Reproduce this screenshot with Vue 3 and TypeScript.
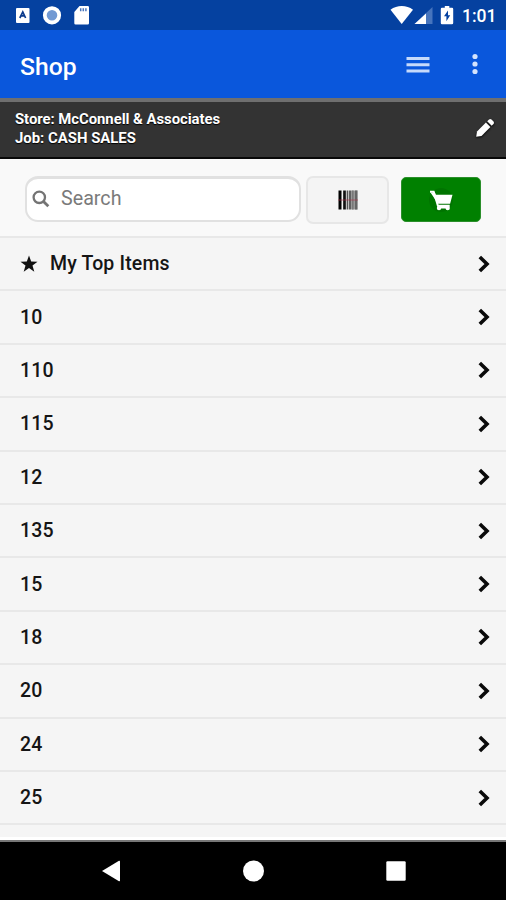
<script setup lang="ts">
interface Row {
  label: string
  starred?: boolean
}

const rows: Row[] = [
  { label: 'My Top Items', starred: true },
  ...['10', '110', '115', '12', '135', '15', '18', '20', '24', '25'].map((label) => ({ label })),
]
</script>

<template>
  <div class="screen">
    <div class="status">
      <svg class="status-left" width="80" height="30" viewBox="0 0 80 30">
        <rect x="0" y="8" width="13.5" height="15" rx="1" fill="#fff" />
        <path d="M3.8 18 6.800 12 9.600 18M5 15.900h3.400" fill="none" stroke="#0a3a8c" stroke-width="1.700" />
        <circle cx="36" cy="15.300" r="7.200" fill="#7199d3" stroke="#fff" stroke-width="3.800" />
        <path d="M63.500 6h8.200a1.300 1.300 0 0 1 1.300 1.300v16a1.300 1.300 0 0 1-1.300 1.300H59.600a1.300 1.300 0 0 1-1.300-1.300V12z" fill="#fff" />
        <path d="M64.700 8.300v3M67.300 8.300v3M69.900 8.300v3" stroke="#4a76bd" stroke-width="1.500" />
      </svg>
      <svg class="status-right" width="72" height="30" viewBox="0 0 72 30">
        <path d="M0.500 9.700C7 4.700 16.500 4.700 23 9.700L11.700 24z" fill="#fff" />
        <path d="M24.500 24 42.500 7V24z" fill="#4674bd" />
        <path d="M24.500 24 36 13.500V24z" fill="#fff" />
        <path d="M54.800 6h4.500v1.800h2.700a1.200 1.200 0 0 1 1.200 1.200v14a1.200 1.200 0 0 1-1.200 1.200h-10a1.200 1.200 0 0 1-1.200-1.200v-14a1.200 1.200 0 0 1 1.200-1.200h2.800z" fill="#fff" />
        <path d="M58 10.500 54 16.300h2.400v5l3.800-6h-2.200z" fill="#0541a0" />
      </svg>
      <span class="clock">1:01</span>
    </div>

    <header class="appbar">
      <h1>Shop</h1>
      <svg class="menu" width="24" height="18" viewBox="0 0 24 18">
        <path d="M.5 2.500h23M.5 8.700h23M.5 15h23" stroke="#c6dafb" stroke-width="2.900" />
      </svg>
      <svg class="dots" width="6" height="22" viewBox="0 0 6 22">
        <circle cx="3" cy="3.500" r="2.600" /><circle cx="3" cy="11" r="2.600" /><circle cx="3" cy="18.500" r="2.600" />
      </svg>
    </header>

    <section class="context">
      <div class="context-text">
        <div class="store">Store: McConnell &amp; Associates</div>
        <div>Job: CASH SALES</div>
      </div>
      <svg class="pencil" width="20" height="20" viewBox="0 0 20 20">
        <path d="M1.200 18.800 2 13.500 10.900 4.600 15.400 9.100 6.500 18z" fill="#fff" />
        <path d="M12.200 3.300 14 1.500Q15.300.6 16.500 1.500L18.500 3.500Q19.400 4.700 18.500 6L16.700 7.800z" fill="#fff" />
      </svg>
    </section>

    <section class="tools">
      <label class="search">
        <svg width="18" height="18" viewBox="0 0 18 18">
          <circle cx="7.300" cy="7.300" r="5.700" fill="none" stroke="#747474" stroke-width="2.300" />
          <path d="M11.500 11.500 16.300 16.300" stroke="#747474" stroke-width="2.800" />
        </svg>
        <input type="text" placeholder="Search" />
      </label>
      <button class="scan">
        <svg width="20" height="20" viewBox="0 0 20 20">
          <rect x="13" y=".5" width="6.500" height="19" fill="#999" />
          <path d="M2 .5v19" stroke="#000" stroke-width="3" />
          <path d="M6.500.5v19" stroke="#111" stroke-width="2.700" />
          <path d="M9.500.5v19" stroke="#555" stroke-width="1.700" />
          <path d="M12 .5v19" stroke="#444" stroke-width="1.700" />
          <path d="M14.800.5v19" stroke="#777" stroke-width="1.500" />
          <path d="M18.200.5v19" stroke="#666" stroke-width="2.400" />
          <path d="M0 10h20" stroke="#b03048" stroke-width="1" opacity=".6" />
        </svg>
      </button>
      <button class="cart">
        <svg width="30" height="26" viewBox="0 0 30 26">
          <circle cx="15" cy="13" r="12" fill="#007400" />
          <path d="M4.500 5.500h4.400l.8 2.300H26.500l-2.400 9H12z" fill="#fff" />
          <path d="M4 4.800h3.700l4.200 14h11.800" fill="none" stroke="#fff" stroke-width="2" />
          <path d="M13 18.500h9v3h-9z" fill="#fff" />
          <circle cx="13" cy="21" r="2.200" fill="#fff" /><circle cx="21.700" cy="21" r="2.200" fill="#fff" />
        </svg>
      </button>
    </section>

    <ul class="list">
      <li v-for="row in rows" :key="row.label">
        <svg v-if="row.starred" class="star" width="18" height="18" viewBox="0 0 18 18">
          <path d="M9 .5 11.200 6.600 17.500 6.700 12.500 10.500 14.300 16.700 9 13.100 3.700 16.700 5.500 10.500.5 6.700 6.800 6.600z" fill="#111" />
        </svg>
        <span>{{ row.label }}</span>
        <svg class="chevron" width="12" height="18" viewBox="0 0 12 18">
          <path d="M1.800 2 9 9 1.800 16" fill="none" stroke="#0a0a0a" stroke-width="3.600" />
        </svg>
      </li>
    </ul>

    <nav class="navbar">
      <svg width="20" height="24" viewBox="0 0 20 24"><path d="M1 12 18 1.800Q19 1.500 19 2.500V21.500Q19 22.500 18 22.200z" fill="#fff" /></svg>
      <svg width="22" height="24" viewBox="0 0 22 24"><circle cx="10.500" cy="12" r="10.500" fill="#fff" /></svg>
      <svg width="20" height="24" viewBox="0 0 20 24"><rect x=".3" y="2.300" width="19.400" height="19.400" rx="1.200" fill="#fff" /></svg>
    </nav>
  </div>
</template>

<style>
body {
  margin: 0;
}
</style>

<style scoped>
.screen {
  display: flex;
  flex-direction: column;
  width: 506px;
  height: 900px;
  overflow: hidden;
  background: #f5f5f5;
  color: #151515;
  font-family: Roboto, "Liberation Sans", sans-serif;
}
.screen > * {
  box-sizing: border-box;
  flex-shrink: 0;
}
svg {
  display: block;
  flex-shrink: 0;
}
.status {
  display: flex;
  height: 30px;
  padding: 0 11px 0 16px;
  align-items: center;
  background: #0541a0;
  color: #fff;
}
.status-right {
  margin-left: auto;
}
.clock {
  width: 33px;
  padding-top: 2px;
  font-size: 17.500px;
  font-weight: 500;
  line-height: 28px;
  white-space: nowrap;
}
.appbar {
  display: flex;
  height: 68px;
  padding: 0 28px 0 20px;
  align-items: center;
  background: #0a57dc;
}
h1 {
  margin: 4px 0 0;
  color: #fff;
  font-size: 24.700px;
  font-weight: 500;
}
.menu {
  margin: 2px 0 0 auto;
}
.dots {
  margin-left: 42px;
  fill: #d4e3fd;
}
.context {
  display: flex;
  height: 61px;
  padding: 0 11px 0 15px;
  align-items: center;
  justify-content: space-between;
  border-top: 4px solid #6f6f6f;
  border-bottom: 2px solid #080808;
  background: #333;
}
.context-text {
  margin-top: -2px;
  color: #fff;
  font-size: 14.900px;
  font-weight: 700;
  line-height: 18.500px;
  text-shadow: 0 1px 1px #000;
}
.store {
  letter-spacing: -0.050px;
}
.pencil {
  margin-top: -3px;
  filter: drop-shadow(0 1px 1px #000);
}
.tools {
  display: flex;
  height: 77px;
  padding: 17px 25px 0;
  background: #f9f9f9;
}
.search {
  display: flex;
  box-sizing: border-box;
  width: 276px;
  height: 46px;
  padding: 0 0 2px 5px;
  align-items: center;
  border: 2px solid #e1e1e1;
  border-top-width: 3px;
  border-radius: 13px;
  background: #fff;
}
.search input {
  width: 220px;
  margin: 0 0 1px 11px;
  padding: 0;
  border: 0;
  outline: 0;
  background: none;
  font: 400 19.700px Roboto, sans-serif;
}
.search input::placeholder {
  color: #7a7a7a;
  opacity: 1;
}
button {
  display: flex;
  box-sizing: border-box;
  padding: 0;
  align-items: center;
  justify-content: center;
}
.scan {
  width: 83px;
  height: 48px;
  margin-left: 5px;
  border: 2px solid #e7e7e7;
  border-radius: 7px;
  background: #f4f4f4;
}
.cart {
  width: 80px;
  height: 45px;
  margin: 1px 0 0 12px;
  border: 1px solid #2b8f2b;
  border-radius: 5px;
  background: #008000;
}
.list {
  height: 604px;
  margin: 0;
  padding: 0;
  overflow: hidden;
  border-top: 2px solid #e8e8e8;
  border-bottom: 3px solid #fff;
  list-style: none;
}
li {
  display: flex;
  box-sizing: border-box;
  height: 53.400px;
  padding: 0 16px 0 20px;
  align-items: center;
  border-bottom: 2px solid #e8e8e8;
  font-size: 19.500px;
  font-weight: 500;
  letter-spacing: 0.150px;
}
.star {
  margin-right: 12px;
}
.chevron {
  margin-left: auto;
}
.navbar {
  display: flex;
  height: 60px;
  padding: 0 100px 0 101px;
  align-items: center;
  justify-content: space-between;
  border-top: 2px solid #777;
  background: #000;
}
</style>
